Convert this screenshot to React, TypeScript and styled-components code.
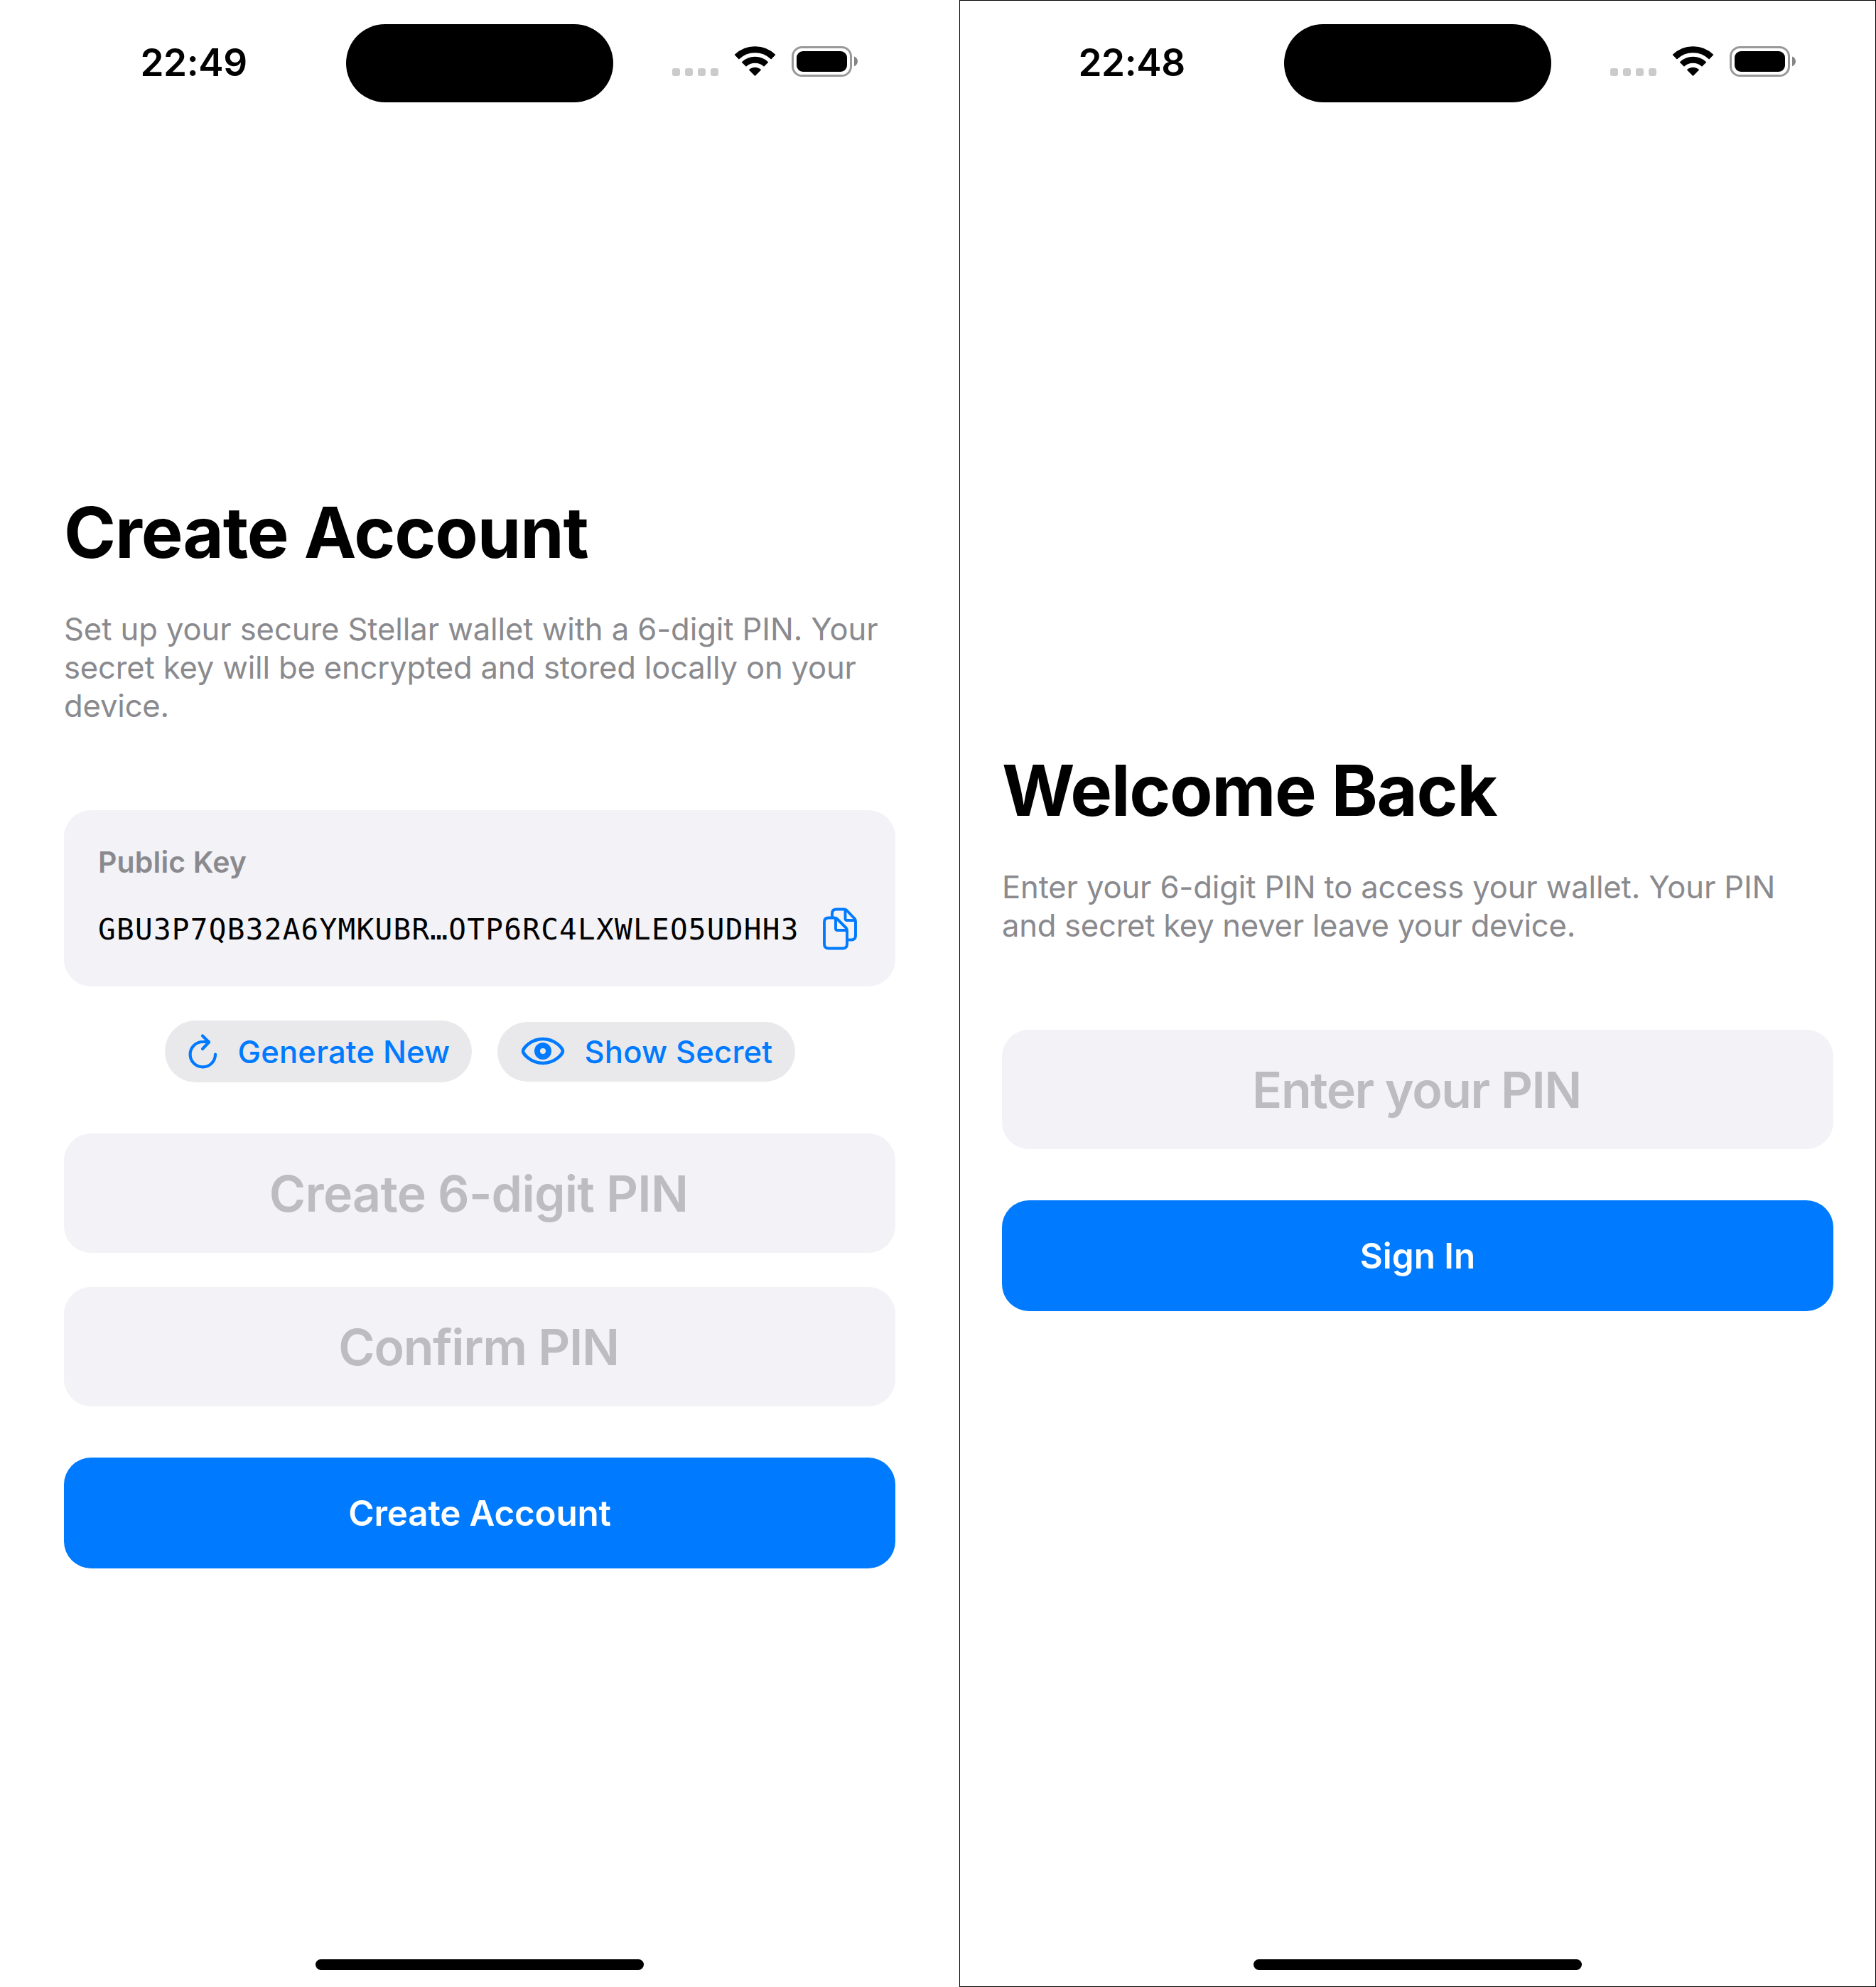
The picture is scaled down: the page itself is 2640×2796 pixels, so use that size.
import React from "react";
import styled, { createGlobalStyle } from "styled-components";

const Global = createGlobalStyle`
  * { box-sizing: border-box; }
  body { margin: 0; background: #fff; font-family: Inter, "Liberation Sans", sans-serif; }
  h1, p { margin: 0; }
`;

const Board = styled.main`
  display: flex;
  width: 2640px;
  height: 2796px;
  overflow: hidden;
  background: #fff;
`;

const Phone = styled.section<{ $framed?: boolean }>`
  display: flex;
  flex-direction: column;
  width: ${(p) => (p.$framed ? 1290 : 1350)}px;
  height: 2796px;
  padding: 0 ${(p) => (p.$framed ? 60 : 90)}px;
  box-shadow: ${(p) => (p.$framed ? "inset 0 0 0 1px #000" : "none")};
`;

const StatusBar = styled.header`
  display: flex;
  height: 180px;
  padding-top: 33px;
`;

const Clock = styled.div`
  width: 397px;
  padding-left: 107.5px;
  font-size: 53px;
  font-weight: 600;
  line-height: 111px;
  letter-spacing: -0.4px;
  white-space: nowrap;
`;

const Island = styled.div`
  width: 376px;
  height: 110px;
  margin-top: 1px;
  border-radius: 55px;
  background: #000;
`;

const StatusIcons = styled.svg`
  width: 262px;
  height: 44px;
  margin: 32px 0 0 83px;
`;

const Content = styled.div<{ $top: number }>`
  display: flex;
  flex-direction: column;
  flex: 1;
  padding-top: ${(p) => p.$top}px;
`;

const Title = styled.h1<{ $spacing: number }>`
  font-size: 98.8px;
  font-weight: 700;
  line-height: 120px;
  letter-spacing: ${(p) => p.$spacing}px;
  white-space: nowrap;
`;

const Subtitle = styled.p`
  margin-top: 50px;
  color: #8a8a8e;
  font-size: 43.6px;
  line-height: 54px;
`;

const Line = styled.span<{ $spacing?: number }>`
  display: block;
  width: max-content;
  letter-spacing: ${(p) => p.$spacing ?? 0}px;
  white-space: nowrap;
`;

const Card = styled.div`
  display: flex;
  flex-direction: column;
  height: 248px;
  margin-top: 119px;
  padding: 47px 53px 0 48px;
  border-radius: 38px;
  background: #f2f2f7;
`;

const CardLabel = styled.div`
  color: #8a8a8e;
  font-size: 41px;
  font-weight: 600;
  line-height: 52px;
  letter-spacing: 0.15px;
  white-space: nowrap;
`;

const KeyRow = styled.div`
  display: flex;
  align-items: center;
  justify-content: space-between;
  height: 64px;
  margin-top: 36px;
`;

const KeyText = styled.span`
  padding-top: 2px;
  font-family: "DejaVu Sans Mono", monospace;
  font-size: 41px;
  line-height: 64px;
  letter-spacing: 1.28px;
  white-space: nowrap;
`;

const CopyIcon = styled.svg`
  width: 50px;
  height: 60px;
`;

const Actions = styled.div`
  display: flex;
  align-items: center;
  justify-content: center;
  gap: 36px;
  height: 87px;
  margin-top: 48px;
`;

const Pill = styled.button<{ $width: number; $height: number; $inset: number; $gap: number }>`
  display: flex;
  align-items: center;
  gap: ${(p) => p.$gap}px;
  width: ${(p) => p.$width}px;
  height: ${(p) => p.$height}px;
  padding: 2px 0 0 ${(p) => p.$inset}px;
  border: 0;
  border-radius: 44px;
  background: #e9e9eb;
  color: #007aff;
  font: 500 43.6px/54px Inter, sans-serif;
  letter-spacing: 0.15px;
  white-space: nowrap;
`;

const Field = styled.div<{ $gap: number; $spacing: number }>`
  height: 168px;
  margin-top: ${(p) => p.$gap}px;
  padding-right: 3px;
  border-radius: 38px;
  background: #f2f2f7;
  color: #bcbcc1;
  font-size: 69.8px;
  font-weight: 600;
  line-height: 169px;
  letter-spacing: ${(p) => p.$spacing}px;
  text-align: center;
  white-space: nowrap;
`;

const Primary = styled.button<{ $spacing: number }>`
  width: 100%;
  height: 156px;
  margin-top: 72px;
  padding: 1px 0 0;
  border: 0;
  border-radius: 38px;
  background: #007aff;
  color: #fff;
  font: 600 49.4px/155px Inter, sans-serif;
  letter-spacing: ${(p) => p.$spacing}px;
  white-space: nowrap;
`;

const HomeBar = styled.div`
  align-self: center;
  width: 462px;
  height: 15px;
  margin-bottom: 24px;
  border-radius: 8px;
  background: #000;
`;

function Status({ time }: { time: string }) {
  return (
    <StatusBar>
      <Clock>{time}</Clock>
      <Island />
      <StatusIcons viewBox="946 65 262 44">
        {[946, 964, 982, 1000].map((x) => (
          <rect key={x} x={x} y="96" width="11" height="11" rx="3.2" fill="#cbcbcb" />
        ))}
        <g fill="none" stroke="#000" strokeWidth="9">
          <path d="M1036.7 80.3A37 37 0 0 1 1088.3 80.3" />
          <path d="M1046.8 90.6A22.5 22.5 0 0 1 1078.2 90.6" />
        </g>
        <path d="M1062.5 107L1053.8 98.2A12.5 12.5 0 0 1 1071.2 98.2Z" />
        <rect x="1115.5" y="66.5" width="82" height="40" rx="13" fill="none" stroke="#999" strokeWidth="3" />
        <rect x="1121" y="72" width="71" height="29" rx="9" />
        <path d="M1202 79.5C1205 80.5 1207 83 1207 86.3S1205 92.3 1202 93.3Z" fill="#858585" />
      </StatusIcons>
    </StatusBar>
  );
}

function RefreshIcon() {
  return (
    <svg width="42" height="50" viewBox="264 1455.5 42 50" overflow="visible" fill="none" stroke="#007aff" strokeWidth="4.2" strokeLinecap="round" strokeLinejoin="round">
      <path d="M303 1483A17.7 17.7 0 1 1 285.3 1465.5H294" />
      <path d="M285 1457L294 1466L285 1475.5" />
    </svg>
  );
}

function EyeIcon() {
  return (
    <svg width="62" height="40" viewBox="733 1461 62 40" overflow="visible">
      <path d="M736 1479C736 1475 747 1462 764 1462S792 1475 792 1479S781 1496 764 1496S736 1483 736 1479Z" fill="none" stroke="#007aff" strokeWidth="4.6" />
      <path fillRule="evenodd" fill="#007aff" d="M752 1479a12 12 0 1 1 24 0a12 12 0 1 1-24 0ZM760 1479a4 4 0 1 0 8 0a4 4 0 1 0-8 0Z" />
    </svg>
  );
}

function CopyGlyph() {
  return (
    <CopyIcon viewBox="1157 1277.5 50 60" fill="none" stroke="#007aff" strokeWidth="3.9" strokeLinejoin="round">
      <path d="M1171 1291V1286Q1171 1280 1177 1280H1188Q1190 1280 1191.5 1281.5L1202.5 1293Q1204 1294.5 1204 1297V1317Q1204 1323 1198 1323H1194" />
      <path d="M1189.5 1281V1293Q1189.5 1295.5 1192 1295.5H1203" />
      <path d="M1166 1292H1174Q1176.5 1292 1178 1293.5L1190.5 1306Q1192 1307.5 1192 1310V1329Q1192 1335 1186 1335H1166Q1160 1335 1160 1329V1298Q1160 1292 1166 1292Z" />
      <path d="M1176 1293V1307Q1176 1309.5 1178.5 1309.5H1191.5" />
    </CopyIcon>
  );
}

export default function App() {
  return (
    <Board>
      <Global />
      <Phone>
        <Status time="22:49" />
        <Content $top={509}>
          <Title $spacing={-1.1}>Create Account</Title>
          <Subtitle>
            <Line $spacing={-0.1}>Set up your secure Stellar wallet with a 6-digit PIN. Your</Line>
            <Line $spacing={-0.18}>secret key will be encrypted and stored locally on your</Line>
            <Line $spacing={-0.17}>device.</Line>
          </Subtitle>
          <Card>
            <CardLabel>Public Key</CardLabel>
            <KeyRow>
              <KeyText>GBU3P7QB32A6YMKUBR…OTP6RC4LXWLEO5UDHH3</KeyText>
              <CopyGlyph />
            </KeyRow>
          </Card>
          <Actions>
            <Pill $width={432} $height={87} $inset={32} $gap={29}>
              <RefreshIcon />
              Generate New
            </Pill>
            <Pill $width={419} $height={84} $inset={33} $gap={28}>
              <EyeIcon />
              Show Secret
            </Pill>
          </Actions>
          <Field $gap={72} $spacing={-0.75}>Create 6-digit PIN</Field>
          <Field $gap={48} $spacing={-1.3}>Confirm PIN</Field>
          <Primary $spacing={-0.2}>Create Account</Primary>
        </Content>
        <HomeBar />
      </Phone>
      <Phone $framed>
        <Status time="22:48" />
        <Content $top={872}>
          <Title $spacing={-1.35}>Welcome Back</Title>
          <Subtitle>
            <Line $spacing={-0.15}>Enter your 6-digit PIN to access your wallet. Your PIN</Line>
            <Line $spacing={-0.27}>and secret key never leave your device.</Line>
          </Subtitle>
          <Field $gap={119} $spacing={-1.45}>Enter your PIN</Field>
          <Primary $spacing={0}>Sign In</Primary>
        </Content>
        <HomeBar />
      </Phone>
    </Board>
  );
}
